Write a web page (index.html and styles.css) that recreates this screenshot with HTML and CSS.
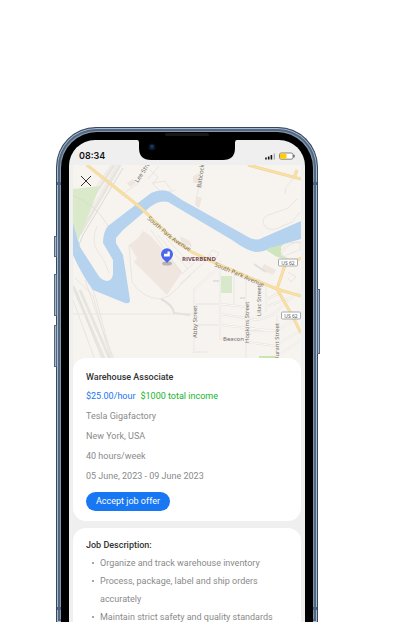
FILE: index.html
```html
<!DOCTYPE html>
<html lang="en">
<head>
<meta charset="utf-8">
<meta name="viewport" content="width=device-width, initial-scale=1">
<title>Warehouse Associate</title>
<link rel="stylesheet" href="styles.css">
</head>
<body>
<div class="phone">
  <span class="side-key key-mute"></span>
  <span class="side-key key-up"></span>
  <span class="side-key key-down"></span>
  <span class="side-key key-power"></span>
  <span class="antenna antenna-left"></span>
  <span class="antenna antenna-right"></span>
  <span class="antenna antenna-left antenna-low"></span>
  <span class="antenna antenna-right antenna-low"></span>
  <div class="bezel">
    <span class="speaker"></span>
    <div class="screen">
      <header class="status">
        <time class="clock">08:34</time>
        <svg class="notch" viewBox="0 0 100 21" aria-hidden="true">
          <path d="M0 0H100Q98 0 98 3V8C98 16 94 20 86 20H14C6 20 2 16 2 8V3Q2 0 0 0Z"/>
          <circle cx="15" cy="7" r="3.6" fill="#0b1320"/>
          <circle cx="15" cy="7" r="2" fill="#132b4d"/>
          <circle cx="15" cy="6" r="0.8" fill="#2b6190"/>
        </svg>
        <svg class="indicators" viewBox="0 0 30 8" aria-hidden="true">
          <path d="M1 5.500V7.500M3.700 4.500V7.500M6.400 3V7.500" stroke="#111" stroke-width="1.600"/>
          <path d="M9.300 1.500V7.500" stroke="#999" stroke-width="1"/>
          <rect x="14.500" y="1" width="13.500" height="6.200" rx="1.800" fill="#fff" stroke="#555" stroke-width=".7"/>
          <path d="M16 1.500H21.500V6.700H16Q15 6.700 15 5.700V2.500Q15 1.500 16 1.500Z" fill="#ffcd0a"/>
          <path d="M29 2.800V5.400" stroke="#333" stroke-width="1"/>
        </svg>
      </header>
      <main>
        <section class="map" aria-label="Map">
          <svg class="map-art" viewBox="73 165 228 205" preserveAspectRatio="xMidYMin slice">
            <rect x="73" y="165" width="228" height="205" fill="#f7f4ef"/>
            <path d="M266 250L289 239L281 247V255L288 259L277 257Z" fill="#cfe5be"/>
            <path d="M221 276H232V293H221Z" fill="#d8e8cb"/>
            <path d="M259 356H276V358H259Z" fill="#c9e6b0"/>
            <g fill="#eee6df">
              <path d="M129 245L138 238L143 231L151 236L182 272L167 295L134 262L137 258Z"/>
              <path d="M264 264L276 270L273 275L261 270Z"/>
              <path d="M193 176L199 173V183H193Z"/>
              <path d="M196 196L202 198L199 208L195 205Z"/>
              <path d="M127 183L133 179L136 183L130 187Z"/>
              <path d="M180 236L190 241L192 247L181 243Z"/>
            </g>
            <g fill="none" stroke="#e8e5e1" stroke-width="3">
              <path d="M114 165L77 222M120 165L80 234M73 286L108 368M80 290L112 364"/>
            </g>
            <g fill="none" stroke="#dedbd7" stroke-width=".6">
              <path d="M117 165L79 230M123 168L83 235L76 252M111 165L75 218M75 278Q82 284 93 296L111 360M73 300L98 368M85 280L106 340L118 368M76 290L104 365"/>
              <path d="M80 247L86 279Q94 288 99 310L112 358"/>
              <path d="M145 166L137 184L128 190L121 196M150 170L158 177L153 184L163 194L175 190M152 183L165 181L171 190M159 166L148 179"/>
              <path d="M129 245L132 282Q142 298 160 299L169 296L191 275"/>
              <path d="M263 223Q262 216 272 214L288 208L297 199M263 223Q266 231 276 229L292 222L300 212M294 178L286 187L285 194"/>
              <path d="M281 254Q289 241 301 242M281 254L290 260M291 262L301 258M202 165L197 196"/>
            </g>
            <path d="M161 299Q173 305 174 313L190 315" fill="none" stroke="#e2dfdb" stroke-width="2"/>
            <path d="M80 247L73 222V255Q82 275 93 290L125 303Q130 304 130 300L123 255L116 243V238L123 230L150 207Q160 200 168 202L232 240Q247 251 256 252Q264 252 270 248L301 239V221L262 238Q257 241 250 238L182 200L170 192Q162 188 151 193L108 226Q103 232 103 243L113 260V274Q112 281 107 281Q101 280 98 275Z" fill="#b5d2ee"/>
            <path d="M73 189L100 186L78 241L73 222Z" fill="#dbe9cb"/>
            <path d="M73 196Q95 203 108 226M123 168L83 235L76 252" fill="none" stroke="#d3d6cb" stroke-width=".6"/>
            <path d="M97 226Q91 240 97 250Q105 260 109 273" fill="none" stroke="#e4e0da" stroke-width=".7"/>
            <g fill="none" stroke="#e2dfdc" stroke-width="2">
              <path d="M220 266L194 290V352H207M220 260V339H244M234 276V306M246 276V358M194 304H220L246 307M194 325H220L276 331M220 314L258 320L272 315L301 290M259 278V320M266 285V312M277 315V356M246 331L276 331M246 342L276 346M265 300L284 291M265 307L290 298M276 331L300 316M276 345L301 330M277 356L301 340M213 281H220M240 298H246M254 264L266 272"/>
            </g>
            <path d="M73 314H194" fill="none" stroke="#e8e5e1" stroke-width="1"/>
            <g fill="none" stroke="#faf9f7" stroke-width="1.100">
              <path d="M220 266L194 290V352H207M220 260V339H244M234 276V306M246 276V358M194 304H220L246 307M194 325H220L276 331M220 314L258 320L272 315L301 290M259 278V320M266 285V312M277 315V356M246 331L276 331M246 342L276 346M265 300L284 291M265 307L290 298M276 331L300 316M276 345L301 330M277 356L301 340"/>
            </g>
            <g fill="none" stroke="#e0dcd7" stroke-width=".6">
              <path d="M151 230L182 274L195 262M158 235L188 269M166 238L190 264M180 284L212 255M206 260L212 250L219 253L213 263M281 250L288 243L300 242V250L286 255M288 272L296 277L291 282L288 278"/>
            </g>
            <g fill="none" stroke="#ecd5a4" stroke-width="3">
              <path d="M87 165L112 185L141 208L173 239L190 251L215 263L250 278L277 289L301 296M277 289L285 265L301 258M277 289L293 317L301 333M248 165L301 179M294 178L297 170"/>
            </g>
            <g fill="none" stroke="#fae0a0" stroke-width="2">
              <path d="M87 165L112 185L141 208L173 239L190 251L215 263L250 278L277 289L301 296M277 289L285 265L301 258M277 289L293 317L301 333M248 165L301 179M294 178L297 170"/>
            </g>
            <defs>
              <path id="park-west" d="M147 219L171 240L200 258"/>
              <path id="park-east" d="M214 266L240 277L274 292"/>
            </defs>
            <g class="street">
              <text><textPath href="#park-west">South Park Avenue</textPath></text>
              <text><textPath href="#park-east">South Park Avenue</textPath></text>
              <text transform="translate(138 183) rotate(-57)">Lee Street</text>
              <text transform="translate(201 188) rotate(-82)">Babcock</text>
              <text transform="translate(197 338) rotate(-90)">Abby Street</text>
              <text transform="translate(249 343) rotate(-90)">Hopkins Street</text>
              <text transform="translate(261 316) rotate(-90)">Lilac Street</text>
              <text transform="translate(279 361) rotate(-90)">Durant Street</text>
              <text x="223" y="341">Beacon</text>
            </g>
            <text class="place" x="182" y="261">RIVERBEND</text>
            <g class="shield">
              <rect x="278.500" y="259" width="19" height="7" rx="1"/>
              <text x="288" y="264.500">US 62</text>
              <rect x="281.500" y="312" width="19" height="7" rx="1"/>
              <text x="291" y="317.500">US 62</text>
            </g>
            <ellipse cx="167" cy="263.500" rx="5" ry="2" fill="#777" opacity=".45"/>
            <path d="M167 263L162.600 258.400A6 6 0 1 1 171.400 258.400Z" fill="#4967ee"/>
            <path d="M164 256.500V253.800H167.500V251.500H169.800V256.500Z" fill="#fff"/>
          </svg>
          <button class="close" type="button" aria-label="Close">
            <svg viewBox="0 0 12 12" aria-hidden="true"><path d="M1 1L11 11M11 1L1 11" stroke="#333" stroke-width="1" fill="none"/></svg>
          </button>
        </section>
        <article class="card offer">
          <h1>Warehouse Associate</h1>
          <p class="pay"><span class="rate">$25.00/hour</span><span class="total">$1000 total income</span></p>
          <p>Tesla Gigafactory</p>
          <p>New York, USA</p>
          <p>40 hours/week</p>
          <p>05 June, 2023 - 09 June 2023</p>
          <button class="accept" type="button">Accept job offer</button>
        </article>
        <article class="card description">
          <h2>Job Description:</h2>
          <ul>
            <li>Organize and track warehouse inventory</li>
            <li>Process, package, label and ship orders accurately</li>
            <li>Maintain strict safety and quality standards</li>
          </ul>
        </article>
      </main>
    </div>
  </div>
</div>
</body>
</html>
```
FILE: styles.css
```css
* { box-sizing: border-box; }

body {
  display: flex;
  flex-direction: column;
  margin: 0;
  height: 100vh;
  overflow: hidden;
  padding: 127px 93px 0 56px;
  background: #fff;
  font-family: Roboto, "Liberation Sans", sans-serif;
  color: #333;
}

.phone {
  position: relative;
  display: flex;
  flex: 1;
  min-height: 0;
  padding: 4px 4px 0;
  border-radius: 40px 40px 0 0;
  background: #8396b0;
  border: 1px solid #354860;
  border-bottom: 0;
  box-shadow: inset 0 0 0 1px #a9bace, inset 0 0 0 3px #53677f;
}

.bezel {
  position: relative;
  display: flex;
  flex: 1;
  min-width: 0;
  padding: 8px 8px 0;
  border-radius: 36px 36px 0 0;
  background: #000;
}

.speaker {
  position: absolute;
  top: 1px;
  left: 50%;
  width: 44px;
  height: 3px;
  margin-left: -22px;
  border-radius: 2px;
  background: #171717;
}

.side-key {
  position: absolute;
  width: 3px;
  background: #a9b9cc;
  border: 1px solid #53657d;
}

.key-mute { left: -3px; top: 108px; height: 21px; }
.key-up { left: -3px; top: 146px; height: 42px; }
.key-down { left: -3px; top: 197px; height: 42px; }
.key-power { right: -3px; top: 161px; height: 65px; }

.antenna {
  position: absolute;
  top: 54px;
  width: 4px;
  height: 3px;
  background: #4d628a;
}

.antenna-left { left: 0; }
.antenna-right { right: 0; }
.antenna-low { top: 479px; }

.screen {
  flex: 1;
  min-width: 0;
  padding: 0 4px;
  border-radius: 26px 26px 0 0;
  background: #efeff0;
  overflow: hidden;
}

.status {
  position: relative;
  display: flex;
  justify-content: space-between;
  align-items: center;
  height: 25px;
  padding: 6px 6px 0;
}

.clock {
  font: 600 9px/12px Inter, "Liberation Sans", sans-serif;
  color: #111;
}

.notch {
  position: absolute;
  top: 0;
  left: 50%;
  width: 100px;
  height: 21px;
  margin-left: -50px;
}

.indicators {
  width: 30px;
  height: 8px;
}

.map {
  position: relative;
  height: 205px;
  overflow: hidden;
}

.map-art {
  display: block;
  width: 100%;
  height: 100%;
}

.street {
  font: 6px "Noto Sans", sans-serif;
  fill: #77716b;
}

.place {
  font: 700 6px "Open Sans", sans-serif;
  fill: #704654;
}

.shield rect {
  fill: #fff;
  stroke: #aaa;
  stroke-width: 1px;
}

.shield text {
  font: 5px "Noto Sans", sans-serif;
  fill: #555;
  text-anchor: middle;
}

.close {
  position: absolute;
  top: 9px;
  left: 6px;
  display: flex;
  width: 14px;
  height: 14px;
  padding: 1px;
  border: 0;
  background: none;
}

.close svg { width: 12px; height: 12px; }

.card {
  position: relative;
  padding: 10px 13px;
  border-radius: 13px;
  background: #fff;
  font-size: 9px;
  line-height: 20px;
  color: #8a8a8a;
}

.offer { margin-top: -12px; }
.description { margin-top: 7px; padding-top: 8px; }

h1, h2, p, ul { margin: 0; }

h1, h2 {
  font-size: 9px;
  font-weight: 500;
  line-height: 18px;
  color: #333;
}

.pay {
  display: flex;
  gap: 5px;
}

.rate { color: #1877f2; }
.total { color: #16b52a; }

.accept {
  display: block;
  height: 19px;
  margin-top: 6px;
  padding: 0 10px;
  border: 0;
  border-radius: 10px;
  background: #1877f2;
  font: inherit;
  line-height: 19px;
  color: #fff;
}

ul {
  padding: 0 0 0 14px;
  list-style: none;
  line-height: 18px;
}

li { position: relative; }

li::before {
  content: "";
  position: absolute;
  top: 8px;
  left: -8px;
  width: 2px;
  height: 2px;
  border-radius: 50%;
  background: #8a8a8a;
}
```
